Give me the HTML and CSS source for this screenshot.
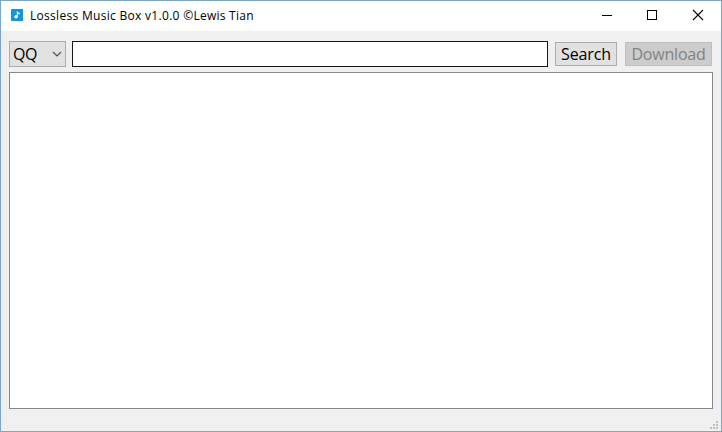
FILE: index.html
```html
<!DOCTYPE html>
<html lang="en">
<head>
<meta charset="utf-8">
<title>Lossless Music Box</title>
<link rel="stylesheet" href="styles.css">
</head>
<body>
<div class="window">
  <header class="titlebar">
    <svg class="app-icon" width="12" height="12" viewBox="0 0 12 12"><rect width="12" height="12" rx="0.8" fill="#1296db"/><path d="M5.8 2.2h.9c.2 1 .9 1.5 2.2 1.7v1.3c-.9 0-1.6-.2-2.1-.6v3.2h-1z" fill="#fff"/><circle cx="5" cy="7.8" r="1.7" fill="#fff"/></svg>
    <h1 class="title">Lossless Music Box v1.0.0 <span class="author">©Lewis Tian</span></h1>
    <div class="controls">
      <svg class="control" width="45" height="30" viewBox="0 0 45 30" shape-rendering="crispEdges"><path d="M17 14.5h10" stroke="#000"/></svg>
      <svg class="control" width="45" height="30" viewBox="0 0 45 30" shape-rendering="crispEdges"><path d="M17.5 9.5h9v9h-9z" fill="none" stroke="#000"/></svg>
      <svg class="control" width="46" height="30" viewBox="0 0 46 30"><path d="M18 9l10 10M28 9l-10 10" stroke="#000" stroke-width="1.1"/></svg>
    </div>
  </header>
  <main class="content">
    <div class="toolbar">
      <div class="combo"><span class="source">QQ</span>
        <svg width="10" height="6" viewBox="0 0 10 6"><path d="M1 1l4 4 4-4" fill="none" stroke="#505050" stroke-width="1.2"/></svg>
      </div>
      <input class="query" type="text" aria-label="Query">
      <button class="button search"><span>Search</span></button>
      <button class="button download" disabled><span>Download</span></button>
    </div>
    <div class="results"></div>
  </main>
  <footer class="statusbar">
    <svg width="8" height="8" viewBox="0 0 8 8" fill="#bfbfbf" shape-rendering="crispEdges"><path d="M6 0h2v2H6zM3 3h2v2H3zM6 3h2v2H6zM0 6h2v2H0zM3 6h2v2H3zM6 6h2v2H6z"/></svg>
  </footer>
</div>
</body>
</html>
```
FILE: styles.css
```css
* { box-sizing: border-box; }
body { margin: 0; font-family: "Open Sans", "Noto Sans", sans-serif; color: #000; }
.window { width: 722px; height: 432px; border: 1px solid #78a7d1; background: #f0f0f0; display: flex; flex-direction: column; overflow: hidden; }
.titlebar { height: 30px; background: #fff; display: flex; align-items: center; padding-left: 10px; flex: none; }
.app-icon { margin-top: -2px; }
.title { margin: 0 0 0 7px; font-size: 12px; font-weight: 400; line-height: 30px; white-space: nowrap; letter-spacing: 0.3px; }
.author { letter-spacing: 0.25px; }
.controls { display: flex; margin-left: auto; }
.control { display: block; }
.content { padding: 10px 8px 0; flex: none; }
.toolbar { display: flex; align-items: center; height: 26px; }
.combo { width: 57px; height: 26px; border: 1px solid #adadad; background: #e1e1e1; display: flex; align-items: center; justify-content: space-between; padding: 0 3px; }
.source { font-size: 16px; line-height: 24px; letter-spacing: -0.5px; }
.query { width: 476px; height: 26px; margin: 0 7px 0 6px; padding: 0 3px; border: 1px solid #171717; border-radius: 0; background: #fff; font: 16px "Open Sans", sans-serif; outline: none; }
.button { height: 24px; padding: 0; border: 1px solid #adadad; border-radius: 0; background: #e1e1e1; color: #000; font: 16px/22px "Open Sans", sans-serif; white-space: nowrap; }
.search { width: 62px; margin-right: 8px; letter-spacing: -0.1px; }
.download { width: 87px; background: #ccc; border-color: #bfbfbf; color: #838383; letter-spacing: -0.2px; }
.results { height: 337px; margin-top: 5px; border: 1px solid #828790; background: #fff; }
.statusbar { flex: 1; display: flex; justify-content: flex-end; align-items: flex-end; padding: 0 3px 2px 0; }
.statusbar svg { display: block; }
```
